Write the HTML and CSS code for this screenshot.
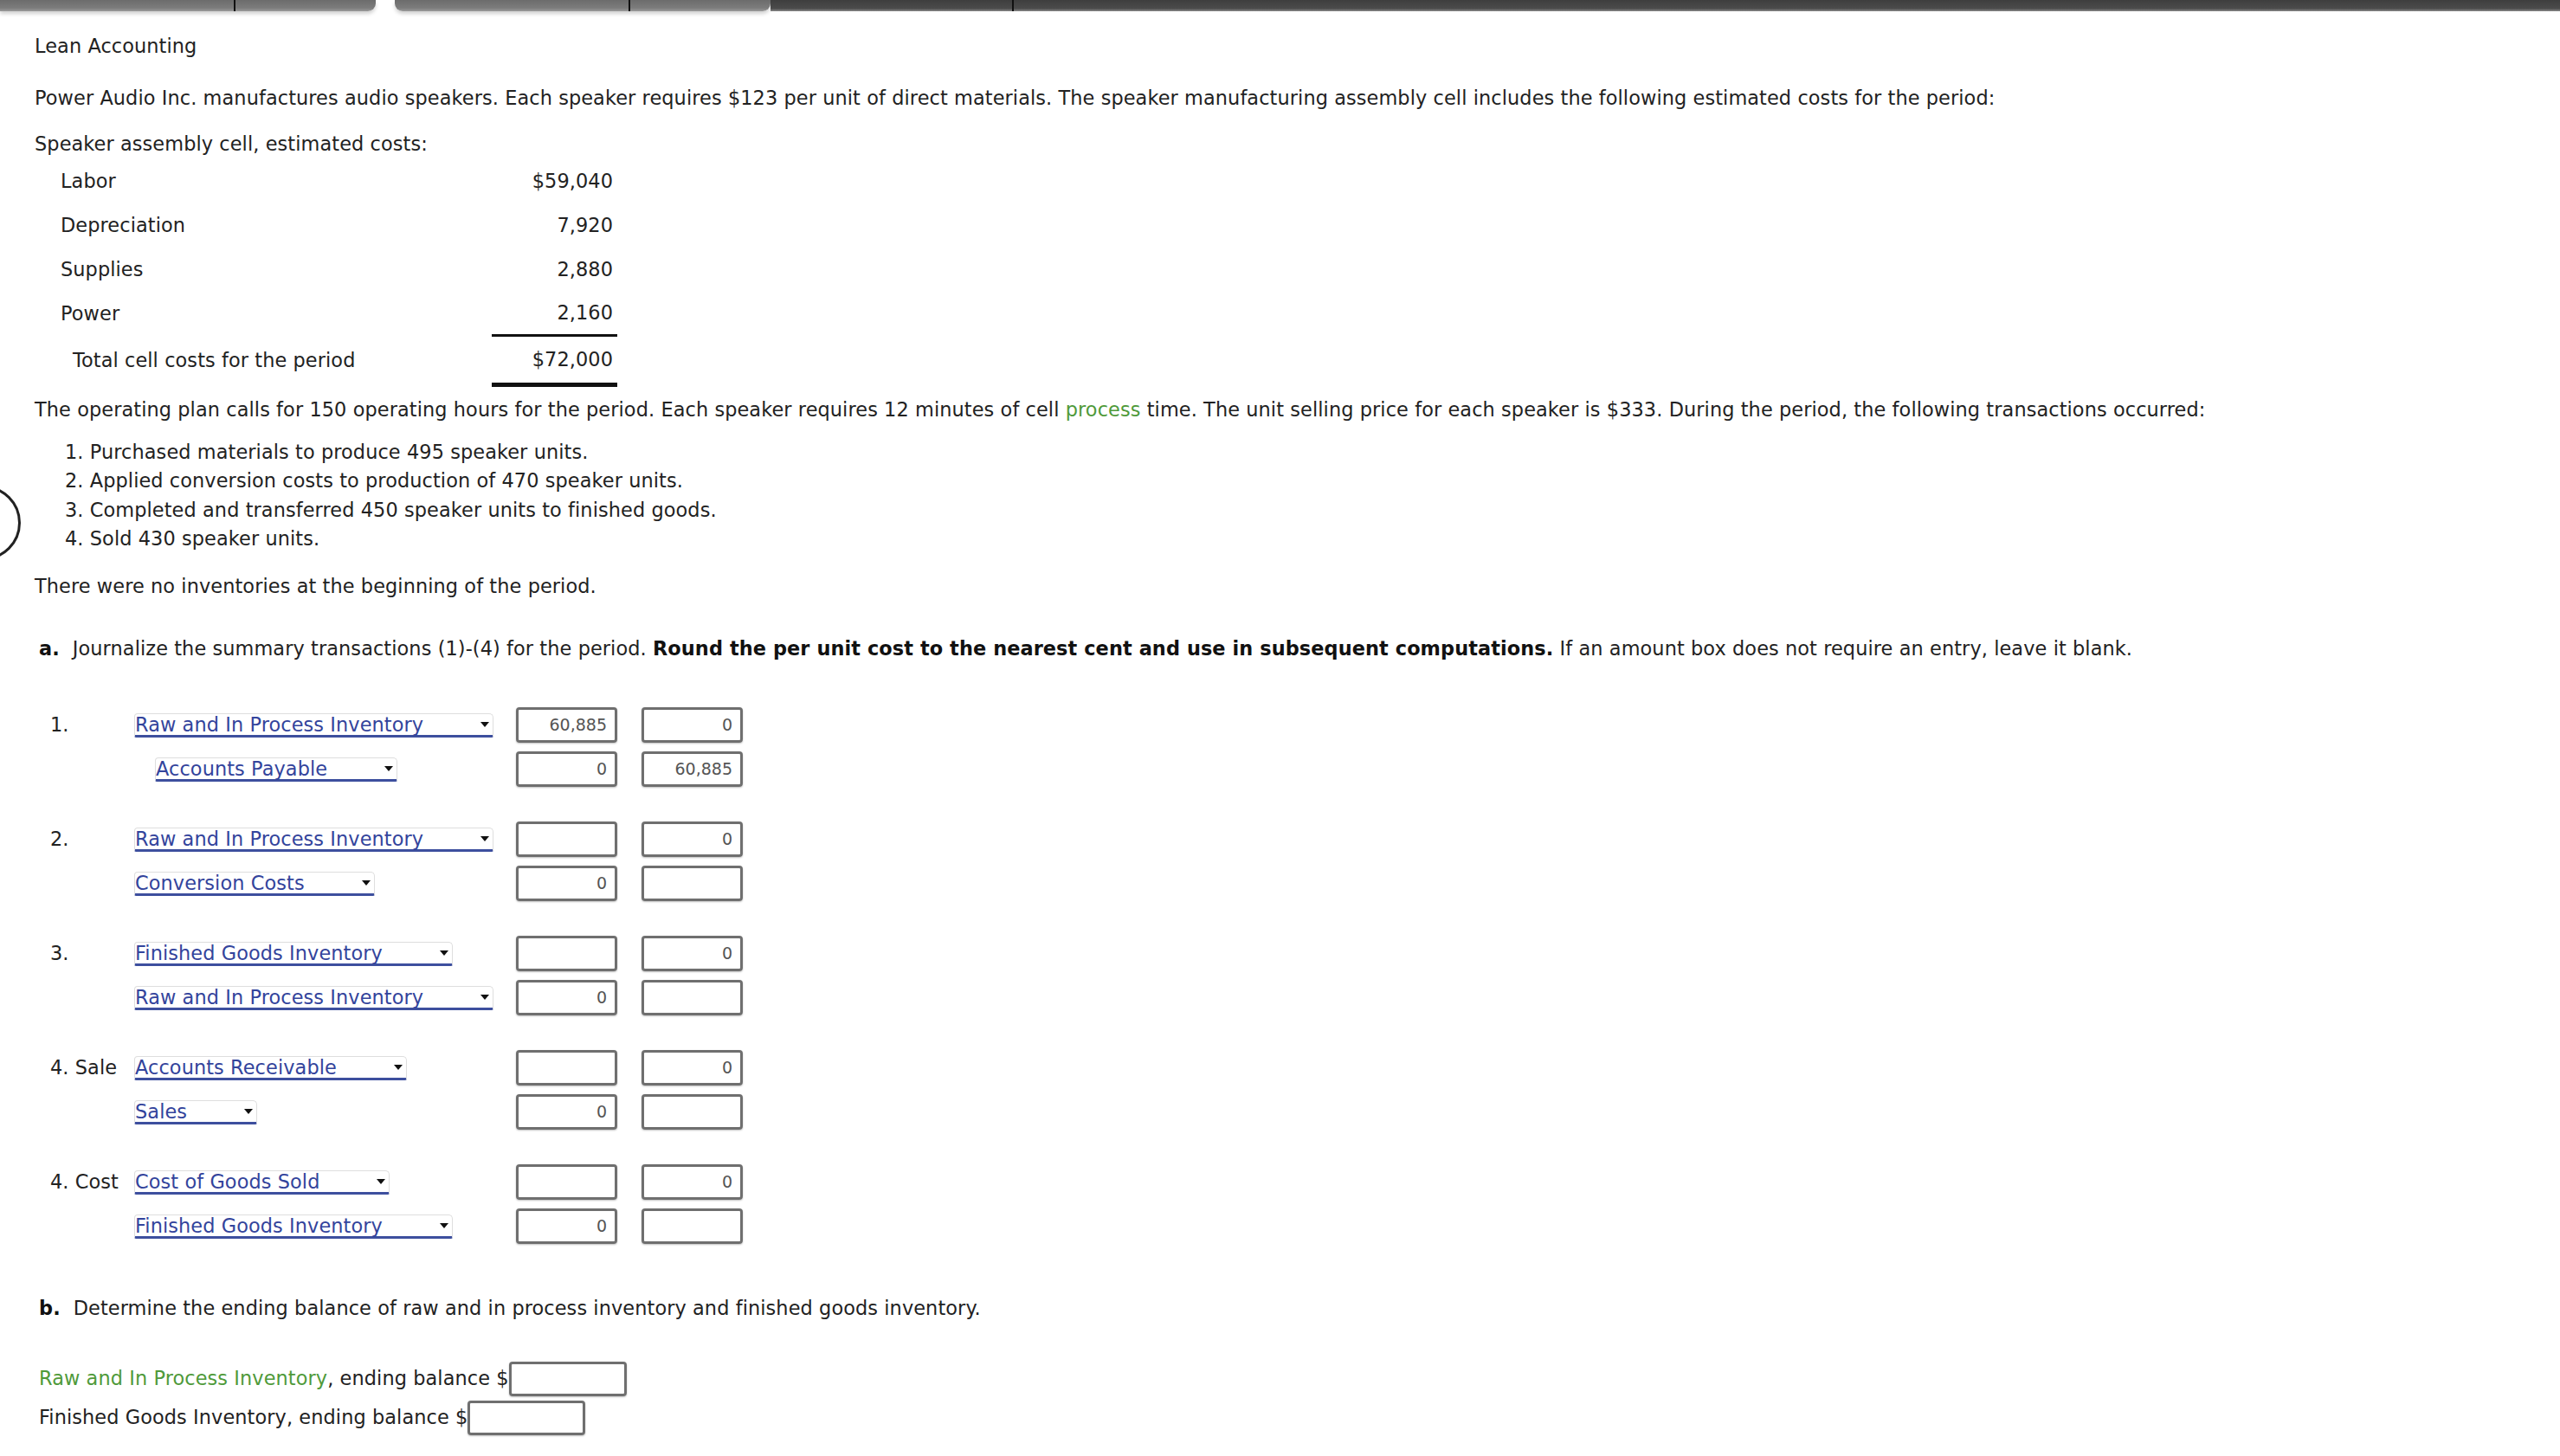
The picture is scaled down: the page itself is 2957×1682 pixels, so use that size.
FILE: index.html
```html
<!DOCTYPE html>
<html lang="en">
<head>
<meta charset="utf-8">
<title>Lean Accounting</title>
<link rel="stylesheet" href="styles.css">
</head>
<body>
<div class="topbar">
  <div class="tabgroup"><span class="tab first"></span><span class="tab"></span></div>
  <div class="tabgroup"><span class="tab first"></span><span class="tab"></span></div>
  <div class="darkbar"><span class="darkseg"></span></div>
</div>
<div class="ring"></div>
<main class="page">
  <p class="title">Lean Accounting</p>
  <p class="intro">Power Audio Inc. manufactures audio speakers. Each speaker requires $123 per unit of direct materials. The speaker manufacturing assembly cell includes the following estimated costs for the period:</p>
  <p class="subhead">Speaker assembly cell, estimated costs:</p>
  <table class="costs">
    <tr><td class="lbl">Labor</td><td class="val">$59,040</td></tr>
    <tr><td class="lbl">Depreciation</td><td class="val">7,920</td></tr>
    <tr><td class="lbl">Supplies</td><td class="val">2,880</td></tr>
    <tr><td class="lbl">Power</td><td class="val single">2,160</td></tr>
    <tr class="total"><td class="lbl indent">Total cell costs for the period</td><td class="val double">$72,000</td></tr>
  </table>
  <p class="plan">The operating plan calls for 150 operating hours for the period. Each speaker requires 12 minutes of cell <span class="green">process</span> time. The unit selling price for each speaker is $333. During the period, the following transactions occurred:</p>
  <ol class="trans">
    <li>Purchased materials to produce 495 speaker units.</li>
    <li>Applied conversion costs to production of 470 speaker units.</li>
    <li>Completed and transferred 450 speaker units to finished goods.</li>
    <li>Sold 430 speaker units.</li>
  </ol>
  <p class="noinv">There were no inventories at the beginning of the period.</p>
  <p class="part"><b class="letter">a.</b>Journalize the summary transactions (1)-(4) for the period. <b>Round the per unit cost to the nearest cent and use in subsequent computations.</b> If an amount box does not require an entry, leave it blank.</p>

  <div class="journal">
    <div class="group">
      <div class="row"><span class="num">1.</span><div class="acct"><span class="select">Raw and In Process Inventory<svg class="arrow" viewBox="0 0 10 8"><path d="M0 1h10L5 7z"/></svg></span></div><span class="amt">60,885</span><span class="amt">0</span></div>
      <div class="row"><span class="num"></span><div class="acct credit"><span class="select">Accounts Payable<svg class="arrow" viewBox="0 0 10 8"><path d="M0 1h10L5 7z"/></svg></span></div><span class="amt">0</span><span class="amt">60,885</span></div>
    </div>
    <div class="group">
      <div class="row"><span class="num">2.</span><div class="acct"><span class="select">Raw and In Process Inventory<svg class="arrow" viewBox="0 0 10 8"><path d="M0 1h10L5 7z"/></svg></span></div><span class="amt"></span><span class="amt">0</span></div>
      <div class="row"><span class="num"></span><div class="acct"><span class="select">Conversion Costs<svg class="arrow" viewBox="0 0 10 8"><path d="M0 1h10L5 7z"/></svg></span></div><span class="amt">0</span><span class="amt"></span></div>
    </div>
    <div class="group">
      <div class="row"><span class="num">3.</span><div class="acct"><span class="select">Finished Goods Inventory<svg class="arrow" viewBox="0 0 10 8"><path d="M0 1h10L5 7z"/></svg></span></div><span class="amt"></span><span class="amt">0</span></div>
      <div class="row"><span class="num"></span><div class="acct"><span class="select">Raw and In Process Inventory<svg class="arrow" viewBox="0 0 10 8"><path d="M0 1h10L5 7z"/></svg></span></div><span class="amt">0</span><span class="amt"></span></div>
    </div>
    <div class="group">
      <div class="row"><span class="num">4. Sale</span><div class="acct"><span class="select">Accounts Receivable<svg class="arrow" viewBox="0 0 10 8"><path d="M0 1h10L5 7z"/></svg></span></div><span class="amt"></span><span class="amt">0</span></div>
      <div class="row"><span class="num"></span><div class="acct"><span class="select">Sales<svg class="arrow" viewBox="0 0 10 8"><path d="M0 1h10L5 7z"/></svg></span></div><span class="amt">0</span><span class="amt"></span></div>
    </div>
    <div class="group">
      <div class="row"><span class="num">4. Cost</span><div class="acct"><span class="select">Cost of Goods Sold<svg class="arrow" viewBox="0 0 10 8"><path d="M0 1h10L5 7z"/></svg></span></div><span class="amt"></span><span class="amt">0</span></div>
      <div class="row"><span class="num"></span><div class="acct"><span class="select">Finished Goods Inventory<svg class="arrow" viewBox="0 0 10 8"><path d="M0 1h10L5 7z"/></svg></span></div><span class="amt">0</span><span class="amt"></span></div>
    </div>
  </div>

  <p class="part partb"><b class="letter">b.</b>Determine the ending balance of raw and in process inventory and finished goods inventory.</p>
  <div class="balances">
    <div class="bal"><span class="green">Raw and In Process Inventory</span>, ending balance $<span class="box"></span></div>
    <div class="bal"><span>Finished Goods Inventory, ending balance $</span><span class="box"></span></div>
  </div>
</main>
</body>
</html>
```

FILE: styles.css
```css
html, body {
  margin: 0;
  padding: 0;
  background: #ffffff;
}

body {
  font-family: "DejaVu Sans", Verdana, sans-serif;
  font-size: 22.4px;
  letter-spacing: 0.1px;
  line-height: 33px;
  color: #222222;
  width: 2957px;
  height: 1682px;
  overflow: hidden;
  position: relative;
}

/* top tab strip */
.topbar {
  display: flex;
  height: 13px;
}

.tabgroup {
  width: 434px;
  height: 13px;
  display: flex;
  background: linear-gradient(#6c6c6c, #7c7c7c 70%, #9a9a9a);
  border-radius: 0 0 9px 9px;
  box-shadow: 0 3px 4px rgba(0, 0, 0, 0.18);
  margin-right: 22px;
}

.tabgroup:first-child {
  border-radius: 0 0 9px 0;
}

.tab {
  height: 100%;
}

.tab.first {
  width: 270px;
  border-right: 2px solid #111111;
}

.darkbar {
  flex: 1;
  margin-left: -22px;
  height: 13px;
  background: linear-gradient(#3e3e3e, #4b4b4b 75%, #8a8a8a);
}

.darkseg {
  display: block;
  width: 279px;
  height: 100%;
  border-right: 2px solid #111111;
}

/* partial circle at left edge */
.ring {
  position: absolute;
  left: -62px;
  top: 561px;
  width: 80px;
  height: 80px;
  border: 3px solid #222222;
  border-radius: 50%;
}

.page {
  padding-left: 40px;
}

p {
  margin: 0;
}

.title { margin-top: 23.5px; }
.intro { margin-top: 27px; }
.subhead { margin-top: 20px; }

.green { color: #4f9a3a; }

/* cost table */
.costs {
  margin-top: 1px;
  margin-left: 30px;
  border-collapse: collapse;
}

.costs td {
  padding: 0;
  height: 51px;
  vertical-align: middle;
}

.costs .lbl {
  width: 498px;
}

.costs .lbl.indent {
  width: 484px;
  padding-left: 14px;
}

.costs .val {
  width: 140px;
  text-align: right;
  padding-right: 5px;
}

.costs .single {
  border-bottom: 3px solid #111111;
  height: 48px;
}

.costs .total td {
  height: 53px;
}

.costs .double {
  border-bottom: 5px solid #111111;
}

.plan { margin-top: 9.5px; }

.trans {
  margin: 16px 0 0 0;
  padding-left: 35px;
  list-style-position: inside;
  line-height: 33.5px;
}

.noinv { margin-top: 21px; }

.part {
  margin-top: 39px;
  padding-left: 5px;
}

.letter {
  margin-right: 15px;
  color: #1a1a1a;
}

.part b {
  color: #111111;
}

/* journal entries */
.journal {
  margin-top: 46px;
  display: flex;
  flex-direction: column;
  gap: 30px;
}

.row {
  display: flex;
  align-items: center;
  height: 51px;
}

.num {
  width: 115px;
  padding-left: 18px;
  box-sizing: border-box;
  flex: none;
  white-space: nowrap;
  color: #222222;
}

.acct {
  width: 441px;
  box-sizing: border-box;
  flex: none;
}

.acct.credit {
  padding-left: 24px;
}

.select {
  display: inline-flex;
  align-items: center;
  height: 24px;
  line-height: 24px;
  color: #33449c;
  border: 1px solid #dedede;
  border-bottom: 3px solid #3d4f9e;
  border-radius: 4px 5px 2px 2px;
  padding-right: 4px;
}

.arrow {
  width: 10px;
  height: 8px;
  margin-left: 66px;
  fill: #111111;
}

.amt {
  box-sizing: border-box;
  width: 117px;
  height: 41px;
  border: 3px solid #6f6f6f;
  border-radius: 4px;
  box-shadow: 0 1px 2px rgba(0, 0, 0, 0.25);
  font-size: 19px;
  letter-spacing: 0;
  line-height: 35px;
  color: #555555;
  text-align: right;
  padding-right: 9px;
  flex: none;
}

.amt + .amt {
  margin-left: 28px;
}

.partb {
  margin-top: 53px;
}

.balances {
  margin-top: 45px;
  padding-left: 5px;
  display: flex;
  flex-direction: column;
  gap: 5px;
}

.bal {
  display: flex;
  align-items: center;
  height: 40px;
}

.box {
  box-sizing: border-box;
  width: 136px;
  height: 40px;
  border: 3px solid #6f6f6f;
  border-radius: 4px;
  box-shadow: 0 1px 2px rgba(0, 0, 0, 0.25);
}
```
